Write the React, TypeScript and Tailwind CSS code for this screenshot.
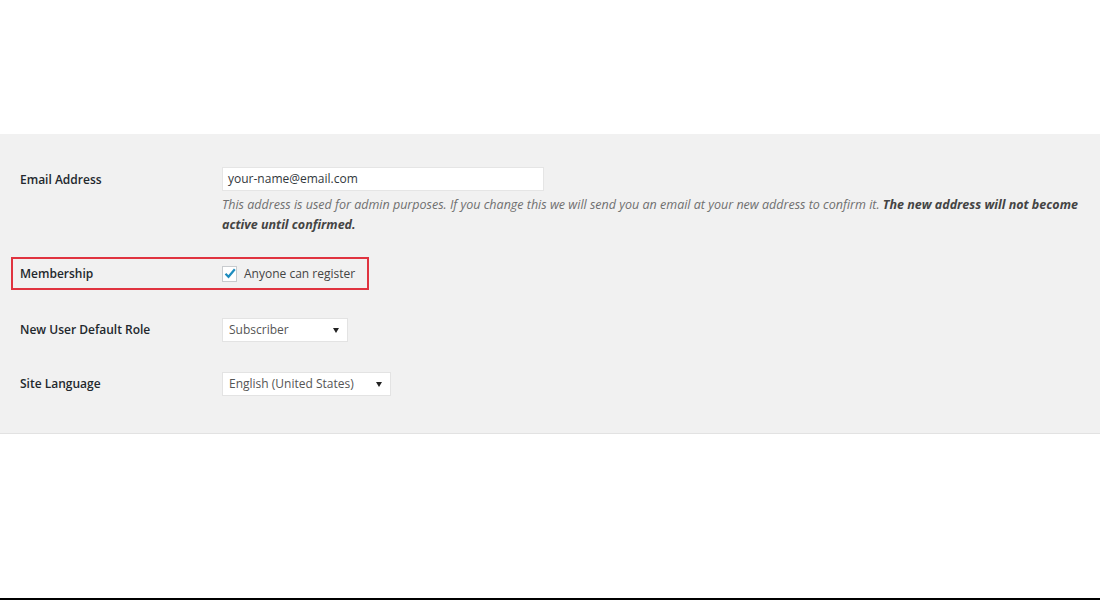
import React from 'react'

const font = { fontFamily: '"Open Sans", "Noto Sans", Arial, sans-serif' }

function Caret() {
  return (
    <svg width="6" height="5" viewBox="0 0 6 5" className="shrink-0">
      <path d="M0 0h6L3 5z" fill="#222" />
    </svg>
  )
}

function Select({ value, width }: { value: string; width: string }) {
  return (
    <div className={`${width} h-[24px] bg-white border border-[#e3e3e3] flex items-center justify-between pl-[6px] pr-[8px] text-[12px] text-[#555]`}>
      <span>{value}</span>
      <Caret />
    </div>
  )
}

export default function App() {
  return (
    <div className="w-[1100px] h-[600px] bg-white flex flex-col" style={font}>
      <div className="h-[134px] shrink-0" />
      <div className="h-[300px] shrink-0 bg-[#f1f1f1] border-b border-[#e2e2e2] pt-[33px]">
        {/* Email */}
        <div className="flex pl-[20px]">
          <div className="w-[202px] h-[25px] flex items-center text-[12px] font-semibold text-[#23282d]">Email Address</div>
          <div className="flex flex-col">
            <div className="w-[322px] h-[24px] bg-white border border-[#e5e5e5] flex items-center px-[5px] text-[12px] text-[#32373c]">
              your-name@email.com
            </div>
            <p className="mt-[4px] text-[12.5px] leading-[20px] italic text-[#6f6f6f] whitespace-nowrap">
              This address is used for admin purposes. If you change this we will send you an email at your new address to confirm it.{' '}
              <b className="text-[#444]">The new address will not become</b>
              <br />
              <b className="text-[#444]">active until confirmed.</b>
            </p>
          </div>
        </div>

        {/* Membership */}
        <div className="mt-[22px] ml-[11px] w-[358px] h-[33px] border-2 border-[#e0333f] flex items-center pl-[7px]">
          <div className="w-[202px] text-[12px] font-semibold text-[#23282d]">Membership</div>
          <div className="flex items-center gap-[7px]">
            <div className="w-[15px] h-[16px] bg-white border border-[#c8cbce] flex items-center justify-center">
              <svg width="12" height="11" viewBox="0 0 12 11">
                <path d="M1.5 5.8l3 3L10.8 1.2" fill="none" stroke="#1e8cbe" strokeWidth="2.2" />
              </svg>
            </div>
            <span className="text-[12px] text-[#444]">Anyone can register</span>
          </div>
        </div>

        {/* Role */}
        <div className="mt-[28px] flex items-center pl-[20px]">
          <div className="w-[202px] text-[12px] font-semibold text-[#23282d]">New User Default Role</div>
          <Select value="Subscriber" width="w-[126px]" />
        </div>

        {/* Language */}
        <div className="mt-[30px] flex items-center pl-[20px]">
          <div className="w-[202px] text-[12px] font-semibold text-[#23282d]">Site Language</div>
          <Select value="English (United States)" width="w-[169px]" />
        </div>
      </div>
      <div className="flex-1" />
      <div className="h-[2px] bg-black shrink-0" />
    </div>
  )
}
